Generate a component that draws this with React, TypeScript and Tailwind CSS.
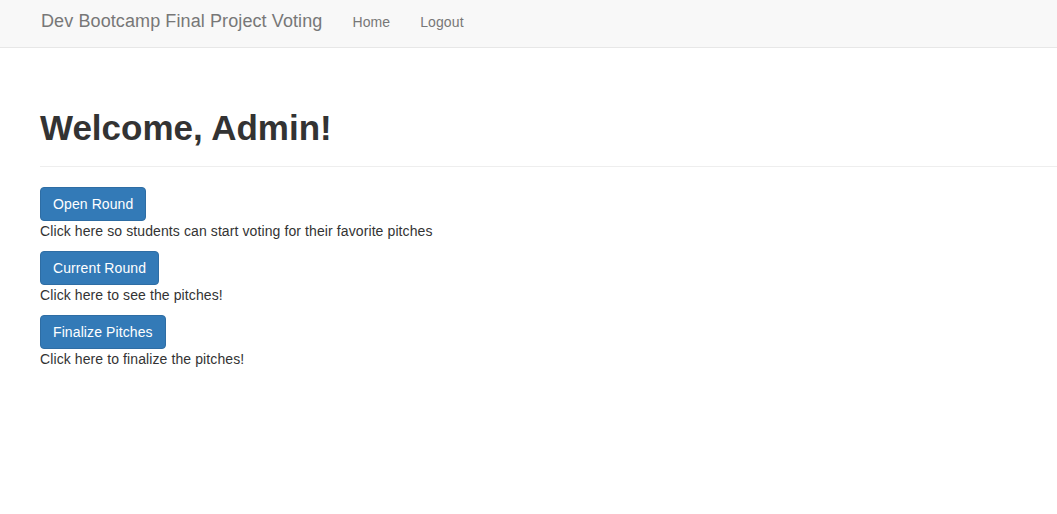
const actions = [
  { label: "Open Round", note: "Click here so students can start voting for their favorite pitches" },
  { label: "Current Round", note: "Click here to see the pitches!" },
  { label: "Finalize Pitches", note: "Click here to finalize the pitches!" },
];

const Navbar = () => {
  return (
    <nav className="h-[48px] bg-[#f8f8f8] border-b border-[#e7e7e7]">
      <div className="flex items-baseline pl-[26px] pt-[11px]">
        <a className="px-[15px] text-[18px] leading-[20px] text-[#777]" href="#">
          Dev Bootcamp Final Project Voting
        </a>
        <a className="px-[15px] text-[14px] leading-[20px] text-[#777]" href="#">
          Home
        </a>
        <a className="px-[15px] text-[14px] leading-[20px] text-[#777]" href="#">
          Logout
        </a>
      </div>
    </nav>
  );
};

export default function App() {
  return (
    <div className="min-h-[514px] bg-white text-[#333] tracking-[0.1px] font-['Liberation_Sans',Arial,sans-serif]">
      <Navbar />
      <main className="pl-[40px]">
        <h1 className="mt-[61px] pb-[19px] border-b border-[#eee] text-[35px] leading-[38px] font-bold tracking-normal">
          Welcome, Admin!
        </h1>
        <div className="mt-[20px] flex flex-col items-start">
          {actions.map((a) => (
            <div key={a.label} className="mb-[10px] flex flex-col items-start">
              <button className="h-[34px] px-[12px] bg-[#337ab7] border border-[#2e6da4] rounded-[4px] text-white text-[14px] leading-[20px]">
                {a.label}
              </button>
              <p className="text-[14px] leading-[20px]">{a.note}</p>
            </div>
          ))}
        </div>
      </main>
    </div>
  );
}
